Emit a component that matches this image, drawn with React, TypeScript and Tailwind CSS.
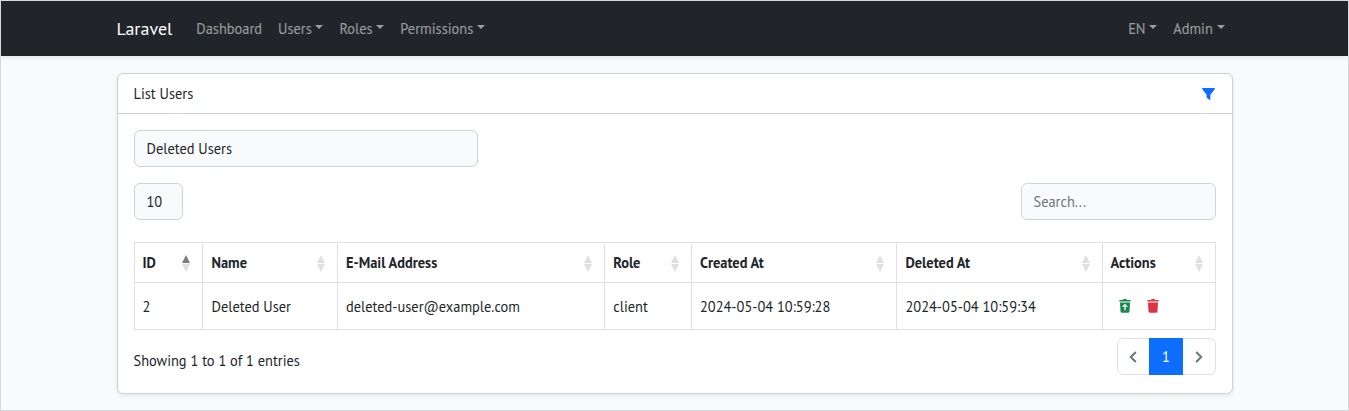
import type { ReactNode } from 'react';

function Caret() {
  return (
    <span className="ml-[3.7px] inline-block border-x-[4.3px] border-t-[4.3px] border-b-0 border-solid border-x-transparent border-t-current align-[4.5px]" />
  );
}

function NavItem({ children, menu = true }: { children: ReactNode; menu?: boolean }) {
  return (
    <a href="#" className="block px-2 py-2 text-white/55">
      {children}
      {menu && <Caret />}
    </a>
  );
}

function Sort({ asc = false }: { asc?: boolean }) {
  return (
    <svg viewBox="0 0 8 17" className="mt-px h-[17px] w-2" aria-hidden="true">
      <path d="M4 0L8 8H0Z" fill={asc ? '#7a7c7e' : '#dfe0e0'} />
      <path d="M4 17L0 9H8Z" fill="#dfe0e0" />
    </svg>
  );
}

function Funnel() {
  return (
    <svg viewBox="0 0 14 12" preserveAspectRatio="none" className="mr-px h-3 w-[13px]" fill="#0d6efd" aria-hidden="true">
      <path d="M.6 0H13.400Q14.200 0 13.700 1.200L9 6.700V11.200Q9 12.400 8 11.700L5.400 10Q5 9.600 5 9V6.700L.3 1.200Q-.2 0 .6 0Z" />
    </svg>
  );
}

function Trash({ restore = false }: { restore?: boolean }) {
  return (
    <svg viewBox="0 0 12 14" className="h-3.5 w-3" fill="currentColor" aria-hidden="true">
      <path d="M4 .9Q4.200 0 5 0H7Q7.800 0 8 .9H11Q11.700 1 11.700 1.700V2.600H.3V1.700Q.3 1 1 .9Z" />
      <path d="M1 3.400H11L10.500 12.600Q10.400 13.700 9.400 13.700H2.600Q1.600 13.700 1.500 12.600Z" />
      {restore && (
        <path d="M6 11.300V6M3.700 7.900L6 5.600L8.300 7.900" fill="none" stroke="#fff" strokeWidth="1.300" />
      )}
    </svg>
  );
}

function Chevron({ right = false }: { right?: boolean }) {
  return (
    <svg viewBox="0 0 8 12" className="h-3 w-2" fill="none" stroke="#6c757d" strokeWidth="2" aria-hidden="true">
      <path d={right ? 'M1.200 1L6.200 6L1.200 11' : 'M6.800 1L1.800 6L6.800 11'} />
    </svg>
  );
}

const columns = [
  { label: 'ID', width: 'w-[68px]', pad: 'pl-2' },
  { label: 'Name', width: 'w-[135px]', pad: 'pl-[9px]' },
  { label: 'E-Mail Address', width: 'w-[267px]', pad: 'pl-[8.5px]' },
  { label: 'Role', width: 'w-[87px]', pad: 'pl-[8.7px]' },
  { label: 'Created At', width: 'w-[205px]', pad: 'pl-[8.5px]' },
  { label: 'Deleted At', width: 'w-[206px]', pad: 'pl-[9px]' },
  { label: 'Actions', width: 'w-[113px]', pad: 'pl-2' },
];

const row = ['2', 'Deleted User', 'deleted-user@example.com', 'client', '2024-05-04 10:59:28', '2024-05-04 10:59:34'];

export default function App() {
  return (
    <div className="h-[411px] overflow-hidden border border-[#d5d9dc] bg-[#f8fafc] font-['PT_Sans','Noto_Sans',sans-serif] text-[14.4px] leading-[23.04px] text-[#212529]">
      <nav className="h-[55px] bg-[#212529] shadow-[0_2px_4px_rgba(0,0,0,0.075)]">
        <div className="mx-auto flex h-full w-[1140px] items-center px-3">
          <a href="#" className="mr-4 text-[18px] text-white">Laravel</a>
          <div className="flex grow">
            <NavItem menu={false}>Dashboard</NavItem>
            <NavItem>Users</NavItem>
            <NavItem>Roles</NavItem>
            <NavItem>Permissions</NavItem>
          </div>
          <div className="flex">
            <NavItem>EN</NavItem>
            <NavItem>Admin</NavItem>
          </div>
        </div>
      </nav>

      <main className="mx-auto w-[1140px] px-3 pt-[17px]">
        <section className="h-[321px] rounded-md border border-[#cfd0d1] bg-white shadow-[0_2px_4px_rgba(0,0,0,0.075)]">
          <header className="flex h-10 items-center justify-between border-b border-[#cfd0d1] px-4">
            <span>List Users</span>
            <Funnel />
          </header>
          <div className="px-4 pt-4">
            <div className="h-[37px] w-[344px] rounded-md border border-[#ced4da] bg-[#f8fafc] px-3 py-1.5">Deleted Users</div>
            <div className="mt-4 flex justify-between">
              <div className="h-[37px] w-[49px] rounded-md border border-[#ced4da] bg-[#f8fafc] px-3 py-1.5">10</div>
              <input
                placeholder="Search..."
                className="h-[37px] w-[195px] rounded-md border border-[#ced4da] bg-[#f8fafc] px-3 py-1.5 placeholder:text-[#6c757d]"
              />
            </div>
            <table className="mt-[22px] w-[1082px] table-fixed border-collapse text-left">
              <thead>
                <tr className="h-10">
                  {columns.map((c, i) => (
                    <th key={c.label} className={`${c.width} ${c.pad} border border-[#dee2e6] py-0 pt-px pr-3 font-bold`}>
                      <div className="flex items-center justify-between">
                        <span>{c.label}</span>
                        <Sort asc={i === 0} />
                      </div>
                    </th>
                  ))}
                </tr>
              </thead>
              <tbody>
                <tr className="h-[47px]">
                  {row.map((v, i) => (
                    <td key={v} className={`${columns[i].pad} border border-[#dee2e6] py-0 pt-px`}>{v}</td>
                  ))}
                  <td className="border border-[#dee2e6] py-0 pr-0 pl-[16.5px]">
                    <div className="flex gap-4">
                      <span className="text-[#198754]"><Trash restore /></span>
                      <span className="text-[#dc3545]"><Trash /></span>
                    </div>
                  </td>
                </tr>
              </tbody>
            </table>
            <div className="mt-2 flex items-center justify-between">
              <div className="pt-[9px]">Showing 1 to 1 of 1 entries</div>
              <div className="flex h-[37px] rounded-md border border-[#dee2e6]">
                <span className="flex w-[31px] items-center justify-center"><Chevron /></span>
                <span className="-my-px flex w-[34px] items-center justify-center bg-[#0d6efd] pl-px text-white">1</span>
                <span className="flex w-8 items-center justify-center"><Chevron right /></span>
              </div>
            </div>
          </div>
        </section>
      </main>
    </div>
  );
}
